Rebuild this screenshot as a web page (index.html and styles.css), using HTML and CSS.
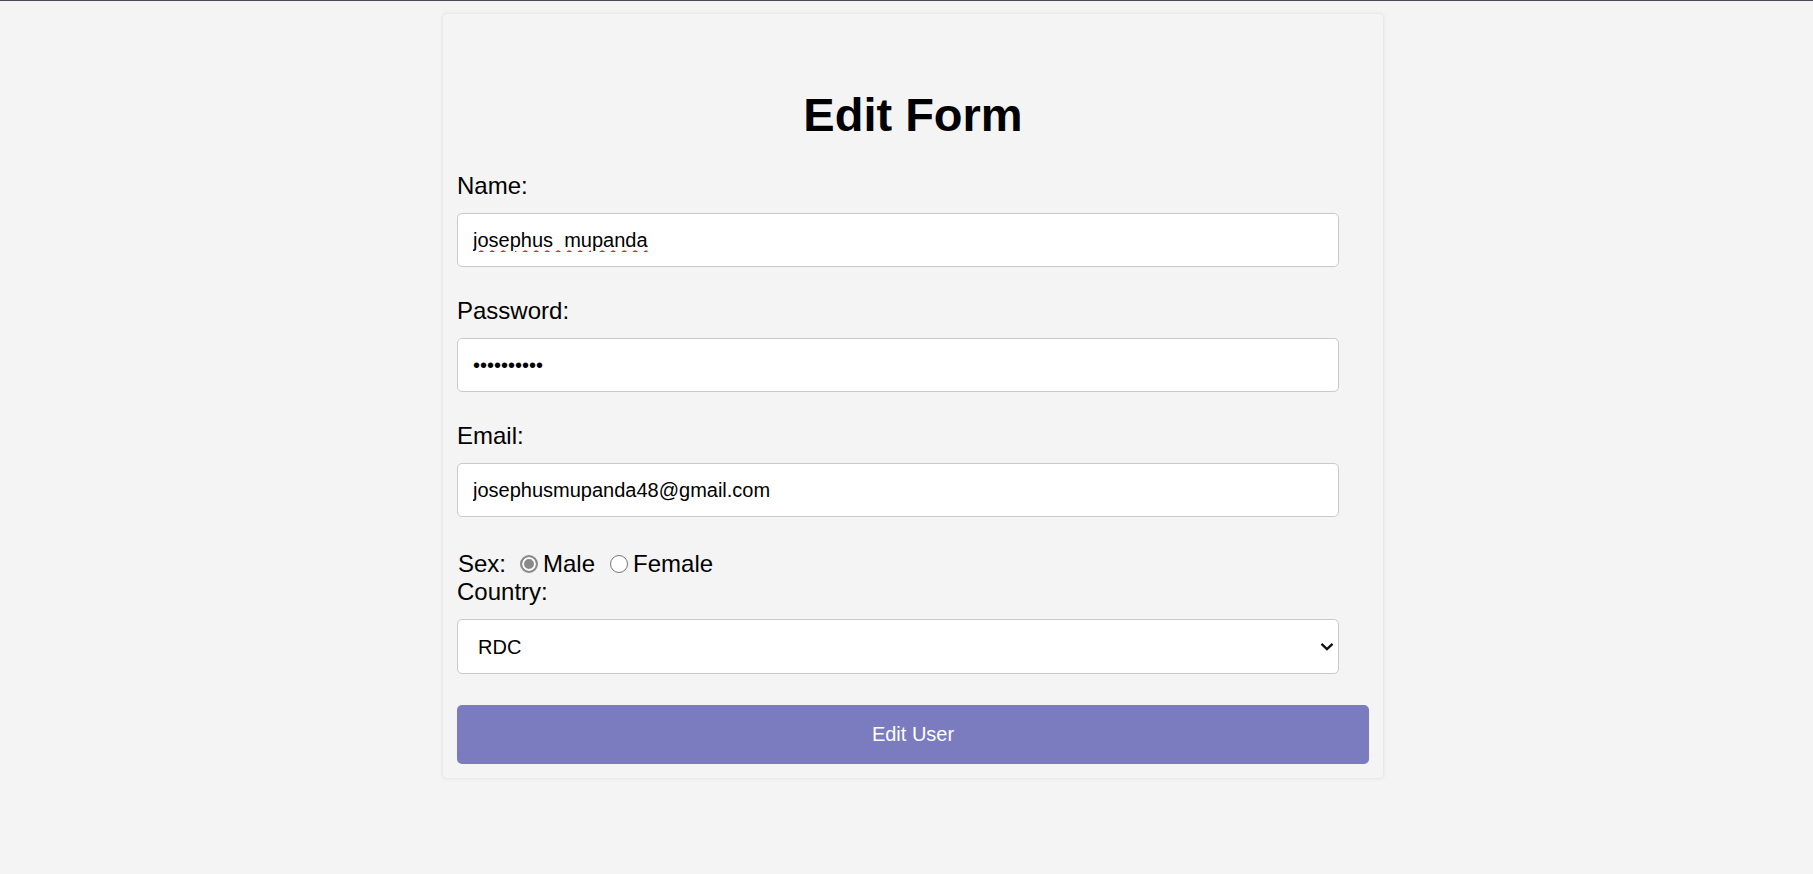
FILE: index.html
```html
<!DOCTYPE html>
<html lang="en">
<head>
<meta charset="utf-8">
<title>Edit Form</title>
<link rel="stylesheet" href="styles.css">
</head>
<body>
<div class="topline"></div>
<div class="card">
  <h1 class="title">Edit Form</h1>
  <form class="form">
    <label class="field-label" for="name">Name:</label>
    <input class="field-input spell" id="name" type="text" value="josephus  mupanda">
    <label class="field-label" for="password">Password:</label>
    <input class="field-input" id="password" type="password" value="1234567890">
    <label class="field-label" for="email">Email:</label>
    <input class="field-input" id="email" type="email" value="josephusmupanda48@gmail.com">
    <div class="sex-row">
      <span class="sex-label">Sex:</span>
      <input class="radio" type="radio" name="sex" id="male" checked>
      <label class="radio-label male" for="male">Male</label>
      <input class="radio" type="radio" name="sex" id="female">
      <label class="radio-label" for="female">Female</label>
    </div>
    <label class="field-label" for="country">Country:</label>
    <div class="select-wrap">
      <select class="field-select" id="country">
        <option>RDC</option>
      </select>
      <svg class="chevron" width="14" height="9" viewBox="0 0 14 9"><path d="M1.5 1.8 L7 7 L12.5 1.8" fill="none" stroke="#111" stroke-width="2.4"/></svg>
    </div>
    <button class="submit" type="button">Edit User</button>
  </form>
</div>
</body>
</html>
```
FILE: styles.css
```css
html, body {
  margin: 0;
  padding: 0;
}
html {
  background: #f4f4f4;
  min-height: 100%;
}
body {
  background: #f4f4f4;
  font-family: "Liberation Sans", Arial, sans-serif;
  color: #000;
  padding-bottom: 40px;
}
.topline {
  height: 1px;
  background: #4a4a52;
}
.card {
  width: 912px;
  margin: 12px 0 0 442px;
  padding: 74px 14px 14px;
  background: #f4f4f4;
  border: 1px solid #e9e9e9;
  border-radius: 5px;
  box-shadow: 0 0 4px rgba(0, 0, 0, 0.06);
}
.title {
  margin: 0 0 31px;
  font-size: 47px;
  line-height: 54px;
  font-weight: bold;
  text-align: center;
}
.form {
  display: flex;
  flex-direction: column;
}
.field-label {
  display: block;
  font-size: 24px;
  line-height: 26px;
  margin-bottom: 14px;
}
.field-input {
  box-sizing: border-box;
  width: 882px;
  height: 54px;
  margin: 0 0 31px;
  padding: 0 15px;
  border: 1px solid #c9c9c9;
  border-radius: 5px;
  background: #fff;
  font-family: "Liberation Sans", Arial, sans-serif;
  font-size: 20px;
  color: #000;
  outline: none;
}
.spell {
  text-decoration: underline wavy #ff1a1a;
  text-decoration-thickness: 1.5px;
  text-underline-offset: 3px;
}
.sex-row {
  display: flex;
  align-items: center;
  height: 31px;
  font-size: 24px;
  line-height: 26px;
}
.sex-label {
  margin-left: 1px;
}
.radio {
  appearance: none;
  -webkit-appearance: none;
  box-sizing: border-box;
  width: 18px;
  height: 18px;
  margin: 0 5px 0 14px;
  border: 1px solid #767676;
  border-radius: 50%;
  background: #fff;
}
.radio:checked {
  border: 2px solid #8a8a8a;
  background: #8a8a8a;
  box-shadow: inset 0 0 0 2px #fff;
}
.radio-label {
  display: inline-block;
}
.male {
  margin-right: 1px;
}
.select-wrap {
  position: relative;
  width: 882px;
  margin-bottom: 31px;
}
.field-select {
  appearance: none;
  -webkit-appearance: none;
  box-sizing: border-box;
  width: 882px;
  height: 55px;
  padding: 0 0 0 20px;
  border: 1px solid #c9c9c9;
  border-radius: 5px;
  background: #fff;
  font-family: "Liberation Sans", Arial, sans-serif;
  font-size: 20px;
  color: #000;
  outline: none;
}
.chevron {
  position: absolute;
  right: 5px;
  top: 23px;
  pointer-events: none;
}
.submit {
  width: 912px;
  height: 59px;
  border: none;
  border-radius: 5px;
  background: #7b7bc0;
  color: #fff;
  font-family: "Liberation Sans", Arial, sans-serif;
  font-size: 20px;
  cursor: pointer;
}
```
